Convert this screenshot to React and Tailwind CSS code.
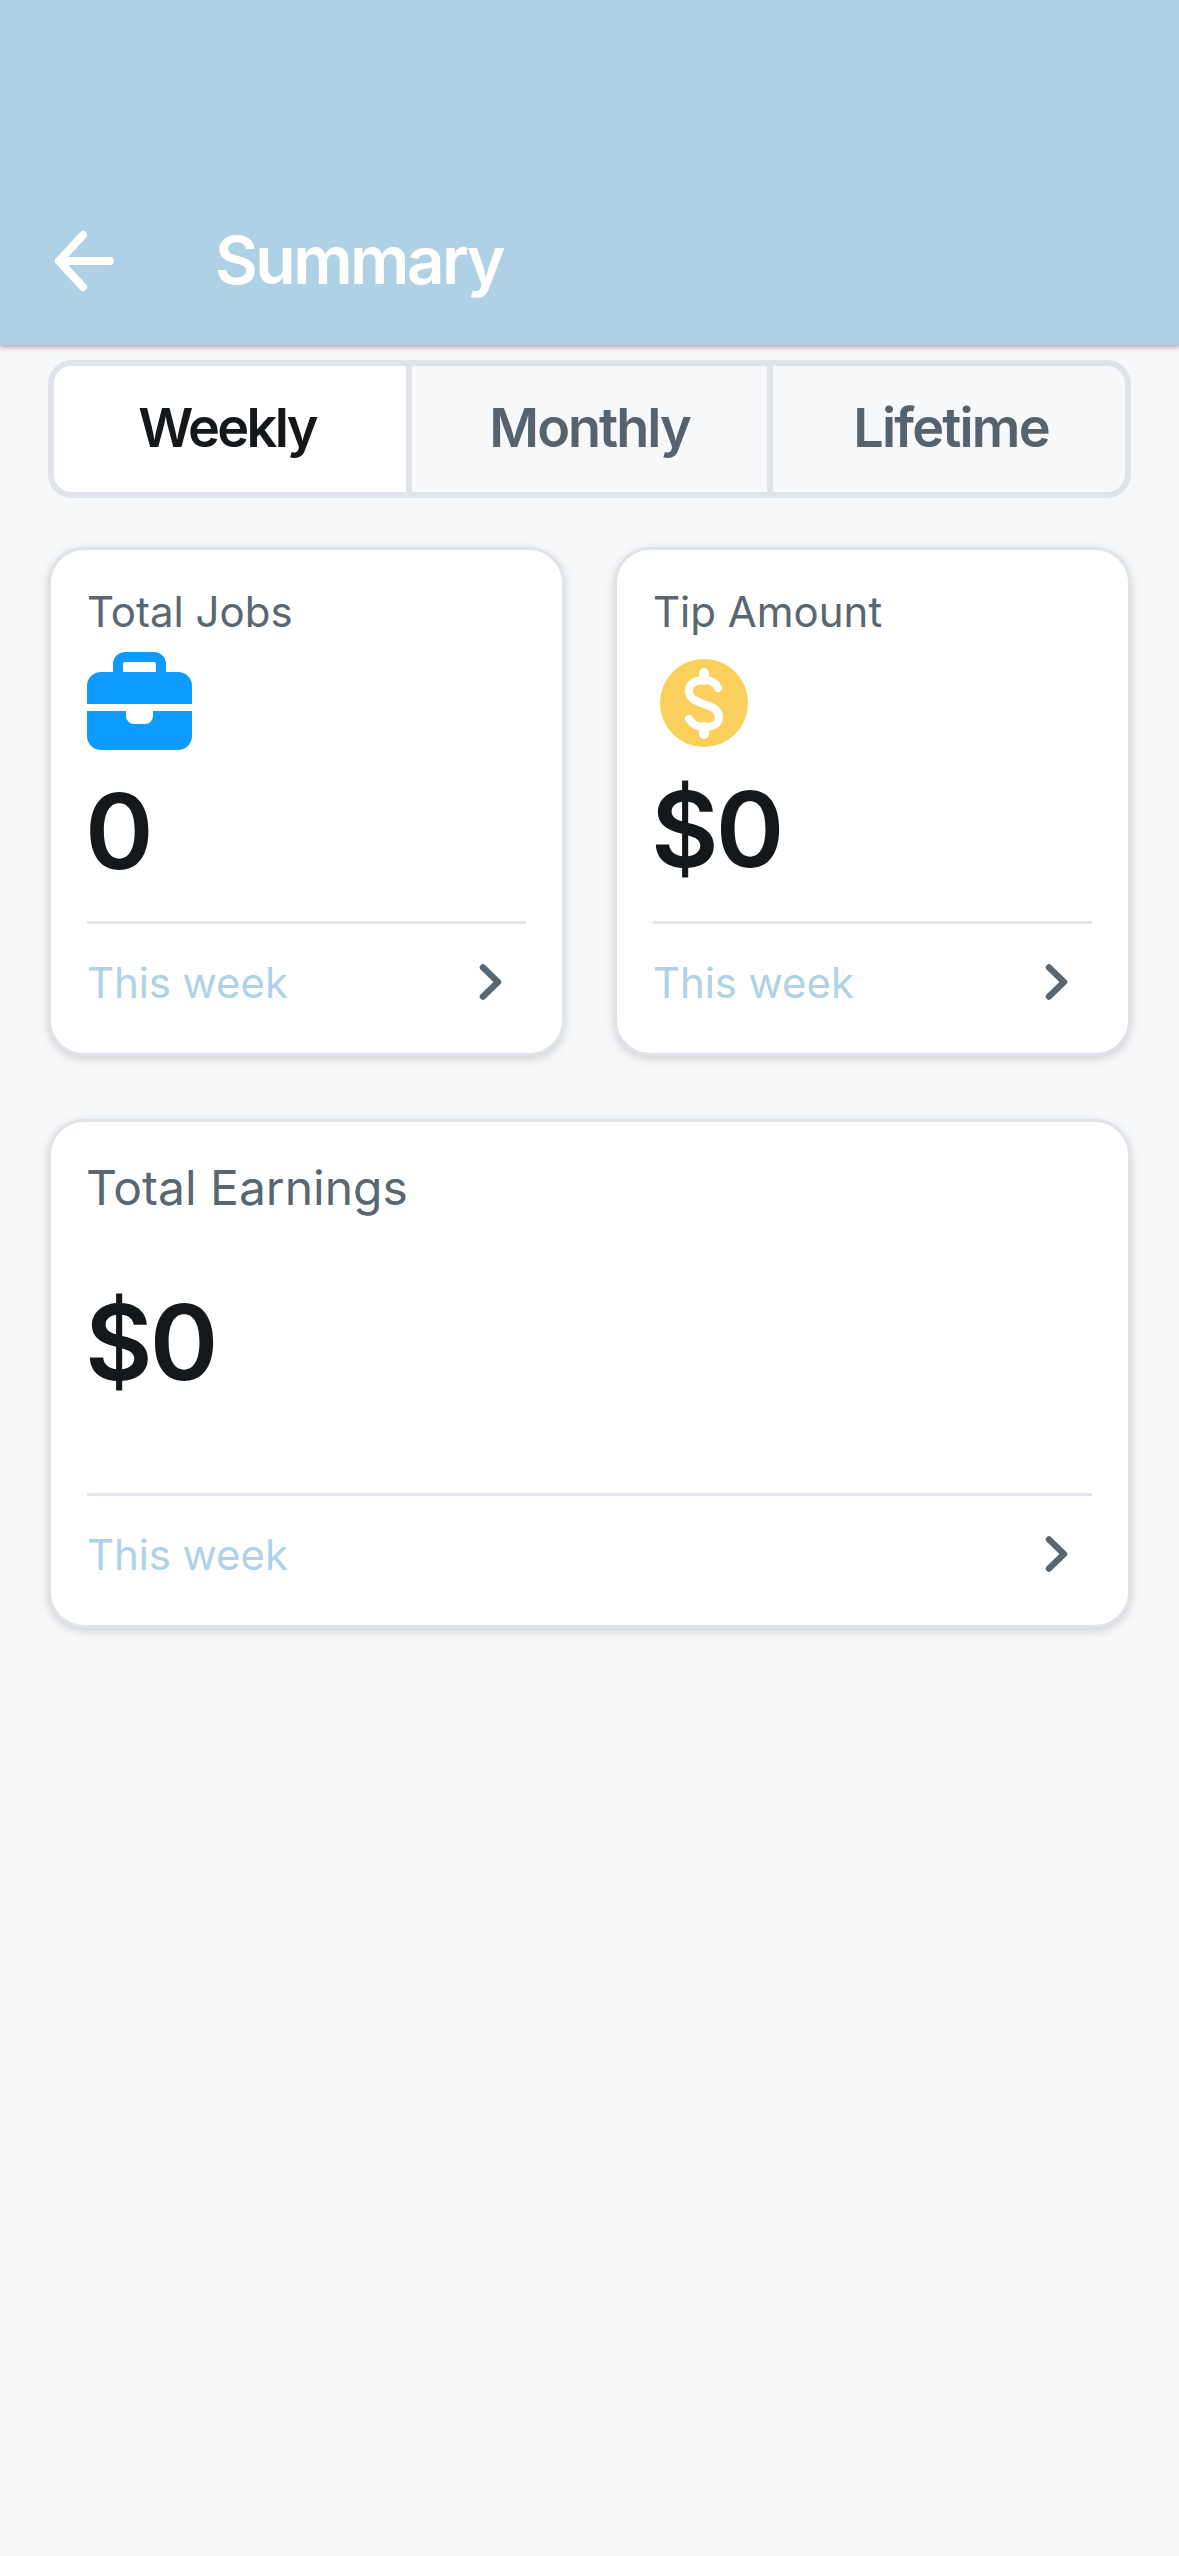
import React from 'react';

const Chevron = () => (
    <svg width="24" height="36" viewBox="0 0 24 36" fill="none" stroke="#5a6670" strokeWidth="6.5" strokeLinecap="round" strokeLinejoin="round" className="mt-[-2px]">
        <path d="M4 3.5 L19 18 L4 32.5" />
    </svg>
);

const BriefcaseIcon = () => (
    <svg width="105" height="98" viewBox="0 0 105 98" fill="#0f9aff" fillRule="evenodd">
        <path d="M14 20 H26 V12 A12 12 0 0 1 38 0 H67 A12 12 0 0 1 79 12 V20 H91 A14 14 0 0 1 105 34 V52 H0 V34 A14 14 0 0 1 14 20 Z M38 10 H67 A2 2 0 0 1 69 12 V20 H36 V12 A2 2 0 0 1 38 10 Z" />
        <path d="M0 59 H39 V64 A8 8 0 0 0 47 72 H58 A8 8 0 0 0 66 64 V59 H105 V84 A14 14 0 0 1 91 98 H14 A14 14 0 0 1 0 84 Z" />
    </svg>
);

const DollarIcon = () => (
    <svg width="88" height="88" viewBox="0 0 88 88" className="ml-[7px] mt-[3px]">
        <circle cx="44" cy="44" r="44" fill="#fbcf5b" />
        <path d="M58 29 C56 24 51 21 44 21 C35 21 29 25 29 32 C29 39 35 42 44 45 C53 48 59 51 59 58 C59 65 53 68 44 68 C37 68 32 65 29 60" fill="none" stroke="#fff" strokeWidth="8" strokeLinecap="round" />
        <path d="M44 14 V21 M44 68 V75" fill="none" stroke="#fff" strokeWidth="10" strokeLinecap="round" />
    </svg>
);

const Footer = () => (
    <div className="mt-auto border-t-[3px] border-[#e2e6ea] h-[132px] pb-[11px] pr-[23px] flex items-center justify-between">
        <span className="text-[42px] leading-none text-[#b0d2e6] tracking-[-0.1px]">This week</span>
        <Chevron />
    </div>
);

const StatCard = ({ label, icon, value, valueClass }) => (
    <div className="bg-white rounded-[36px] border-[3px] border-[#e0e3e7] shadow-[0_3px_10px_rgba(0,0,0,0.16)] h-[509px] px-[36px] flex flex-col">
        <p className="mt-[37px] text-[42px] leading-[50px] text-[#5a6670]">{label}</p>
        <div className="mt-[15px] h-[98px] flex items-center">{icon}</div>
        <p className={`${valueClass} ml-[-2px] text-[104px] leading-[116px] font-semibold text-[#14181b] tracking-[-3px]`}>{value}</p>
        <Footer />
    </div>
);

const tabs = [
    { name: 'Weekly', cls: 'pr-[6px] tracking-[-2.6px] bg-white text-[#14181b]' },
    { name: 'Monthly', cls: 'tracking-[-2px] border-l-[6px] border-[#e0e3e8] text-[#57636c]' },
    { name: 'Lifetime', cls: 'pl-[4px] tracking-[-1.8px] border-l-[6px] border-[#e0e3e8] text-[#57636c]' },
];

export default function App() {
    return (
        <div className="min-h-[2556px] bg-[#f6f8fa] font-['Inter',sans-serif]">
            <header className="h-[345px] bg-[#afd1e6] shadow-[0_2px_5px_rgba(0,0,0,0.35)] flex items-end pb-[48px] pl-[48px] relative">
                <div className="flex items-center h-[72px]">
                    <svg width="72" height="72" viewBox="0 0 72 72" fill="none" stroke="#fff" strokeWidth="8" strokeLinecap="round" strokeLinejoin="round">
                        <path d="M35 10 L11 36 L35 62 M11 36 H62" />
                    </svg>
                    <h1 className="ml-[95px] mt-[-2px] text-[66px] leading-[72px] font-semibold text-white tracking-[-2.6px]">Summary</h1>
                </div>
            </header>

            <main className="px-[48px] pt-[15px]">
                <div className="grid grid-cols-[352px_361px_358px] h-[138px] rounded-[24px] border-[6px] border-[#e0e3e8] overflow-hidden">
                    {tabs.map((tab) => (
                        <div key={tab.name} className={`flex items-center justify-center pb-[4px] text-[54px] font-semibold ${tab.cls}`}>
                            {tab.name}
                        </div>
                    ))}
                </div>

                <div className="mt-[49px] grid grid-cols-2 gap-[49px]">
                    <StatCard label="Total Jobs" icon={<BriefcaseIcon />} value="0" valueClass="mt-[23px]" />
                    <StatCard label="Tip Amount" icon={<DollarIcon />} value="$0" valueClass="mt-[21px]" />
                </div>

                <div className="mt-[63px] bg-white rounded-[36px] border-[3px] border-[#e0e3e7] shadow-[0_3px_10px_rgba(0,0,0,0.16)] h-[509px] px-[36px] flex flex-col">
                    <p className="mt-[37px] text-[48px] leading-[58px] text-[#5a6670] ml-[-1px]">Total Earnings</p>
                    <p className="mt-[67px] ml-[-2px] text-[104px] leading-[116px] font-semibold text-[#14181b] tracking-[-3px]">$0</p>
                    <Footer />
                </div>
            </main>
        </div>
    );
}
